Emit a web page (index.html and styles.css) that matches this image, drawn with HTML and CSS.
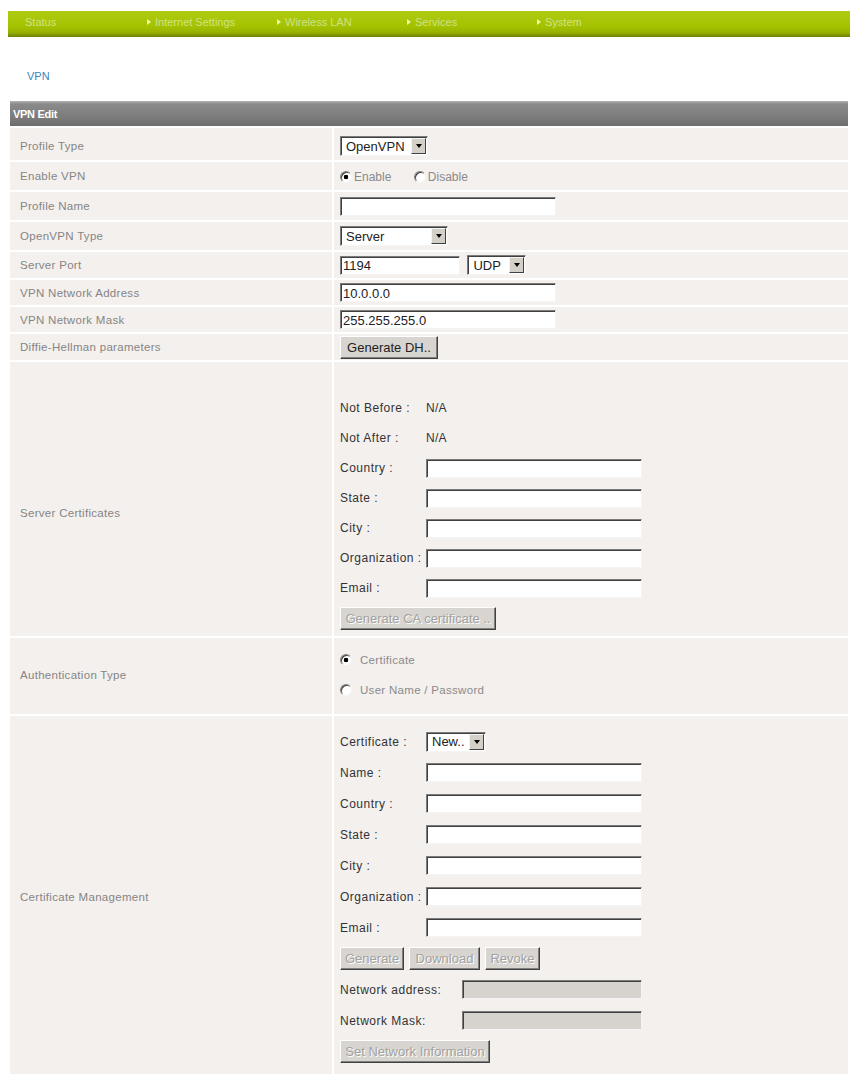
FILE: index.html
```html
<!DOCTYPE html>
<html lang="en">
<head>
    <meta charset="UTF-8">
    <meta name="viewport" content="width=device-width, initial-scale=1.0">
    <title>VPN</title>
    <link rel="stylesheet" href="styles.css">
</head>
<body>
    <div class="page">
        <ul class="menu">
            <li class="menu-item current">Status</li>
            <li class="menu-item">Internet Settings</li>
            <li class="menu-item">Wireless LAN</li>
            <li class="menu-item">Services</li>
            <li class="menu-item">System</li>
        </ul>

        <h1 class="page-title">VPN</h1>

        <table class="vpn-table">
            <tr>
                <th class="table-head" colspan="2">VPN Edit</th>
            </tr>
            <tr class="row-first">
                <td class="label">Profile Type</td>
                <td class="value">
                    <span class="combo combo-profile"><select><option>OpenVPN</option></select><span class="combo-btn"></span></span>
                </td>
            </tr>
            <tr class="row-30">
                <td class="label">Enable VPN</td>
                <td class="value">
                    <label class="choice"><input type="radio" name="enable" checked> Enable</label>
                    <label class="choice"><input type="radio" name="enable"> Disable</label>
                </td>
            </tr>
            <tr class="row-30">
                <td class="label">Profile Name</td>
                <td class="value"><input type="text" class="text-input input-long"></td>
            </tr>
            <tr class="row-30">
                <td class="label">OpenVPN Type</td>
                <td class="value">
                    <span class="combo combo-type"><select><option>Server</option></select><span class="combo-btn"></span></span>
                </td>
            </tr>
            <tr class="row-28">
                <td class="label">Server Port</td>
                <td class="value">
                    <input type="text" class="text-input input-port" value="1194">
                    <span class="combo combo-proto"><select><option>UDP</option></select><span class="combo-btn"></span></span>
                </td>
            </tr>
            <tr class="row-27">
                <td class="label">VPN Network Address</td>
                <td class="value"><input type="text" class="text-input input-long" value="10.0.0.0"></td>
            </tr>
            <tr class="row-27">
                <td class="label">VPN Network Mask</td>
                <td class="value"><input type="text" class="text-input input-long" value="255.255.255.0"></td>
            </tr>
            <tr class="row-28">
                <td class="label">Diffie-Hellman parameters</td>
                <td class="value"><button class="btn btn-dh">Generate DH..</button></td>
            </tr>
            <tr class="row-cert">
                <td class="label">Server Certificates</td>
                <td class="value">
                    <div class="field-list">
                        <div class="field-row"><span class="field-name">Not Before :</span><span class="field-text">N/A</span></div>
                        <div class="field-row"><span class="field-name">Not After :</span><span class="field-text">N/A</span></div>
                        <div class="field-row"><span class="field-name">Country :</span><input type="text" class="text-input input-long"></div>
                        <div class="field-row"><span class="field-name">State :</span><input type="text" class="text-input input-long"></div>
                        <div class="field-row"><span class="field-name">City :</span><input type="text" class="text-input input-long"></div>
                        <div class="field-row"><span class="field-name">Organization :</span><input type="text" class="text-input input-long"></div>
                        <div class="field-row"><span class="field-name">Email :</span><input type="text" class="text-input input-long"></div>
                        <div class="field-row"><button class="btn btn-ca" disabled>Generate CA certificate ..</button></div>
                    </div>
                </td>
            </tr>
            <tr class="row-auth">
                <td class="label">Authentication Type</td>
                <td class="value">
                    <div class="field-list">
                        <div class="field-row"><label class="choice choice-wide"><input type="radio" name="auth" checked> Certificate</label></div>
                        <div class="field-row"><label class="choice choice-wide"><input type="radio" name="auth"> User Name / Password</label></div>
                    </div>
                </td>
            </tr>
            <tr class="row-manage">
                <td class="label">Certificate Management</td>
                <td class="value">
                    <div class="field-list list-31">
                        <div class="field-row">
                            <span class="field-name">Certificate :</span>
                            <span class="combo combo-new"><select><option>New..</option></select><span class="combo-btn"></span></span>
                        </div>
                        <div class="field-row"><span class="field-name">Name :</span><input type="text" class="text-input input-long"></div>
                        <div class="field-row"><span class="field-name">Country :</span><input type="text" class="text-input input-long"></div>
                        <div class="field-row"><span class="field-name">State :</span><input type="text" class="text-input input-long"></div>
                        <div class="field-row"><span class="field-name">City :</span><input type="text" class="text-input input-long"></div>
                        <div class="field-row"><span class="field-name">Organization :</span><input type="text" class="text-input input-long"></div>
                        <div class="field-row"><span class="field-name">Email :</span><input type="text" class="text-input input-long"></div>
                        <div class="field-row btn-group">
                            <button class="btn btn-generate" disabled>Generate</button>
                            <button class="btn btn-download" disabled>Download</button>
                            <button class="btn btn-revoke" disabled>Revoke</button>
                        </div>
                        <div class="field-row"><span class="field-name field-name-wide">Network address:</span><input type="text" class="text-input input-net" disabled></div>
                        <div class="field-row"><span class="field-name field-name-wide">Network Mask:</span><input type="text" class="text-input input-net" disabled></div>
                        <div class="field-row"><button class="btn btn-network" disabled>Set Network Information</button></div>
                    </div>
                </td>
            </tr>
        </table>
    </div>
</body>
</html>
```

FILE: styles.css
```css
* {
    margin: 0;
    padding: 0;
    box-sizing: border-box;
}

body {
    font-family: "Liberation Sans", Arial, sans-serif;
    background-color: #fff;
    color: #333;
}

.page {
    padding: 11px 4px 0 8px;
}

/* top menu */
.menu {
    display: flex;
    align-items: center;
    list-style: none;
    height: 26px;
    padding: 0 0 4px 9px;
    background: linear-gradient(#afcb12, #a5c200 60%, #98b200 82%, #6f8008);
}

.menu-item {
    width: 130px;
    display: flex;
    align-items: center;
    gap: 4px;
    font-size: 11px;
    color: #d0e284;
}

.menu-item::before {
    content: "";
    border-left: 4px solid #eefca0;
    border-top: 3px solid transparent;
    border-bottom: 3px solid transparent;
}

.menu-item.current::before {
    visibility: hidden;
}

.page-title {
    font-size: 11px;
    font-weight: normal;
    line-height: 20px;
    color: #3d82b8;
    margin: 29px 0 15px 19px;
}

/* form table */
.vpn-table {
    width: 838px;
    margin: 0 2px;
    border-collapse: separate;
    border-spacing: 0;
}

.table-head {
    height: 27px;
    border-bottom: 2px solid #fff;
    background: linear-gradient(#b4b4b4, #8a8a8a 12%, #7a7a7a 70%, #6c6c6c);
    color: #fff;
    font-size: 11px;
    font-weight: bold;
    text-align: left;
    padding-left: 3px;
    letter-spacing: -0.3px;
}

.label,
.value {
    background-color: #f4f0ee;
    border-bottom: 2px solid #fff;
    vertical-align: middle;
}

.label {
    width: 324px;
    border-right: 2px solid #fff;
    padding-left: 10px;
    font-size: 11.5px;
    letter-spacing: 0.3px;
    color: #858585;
}

.value {
    padding-left: 6px;
}

.row-first td {
    height: 34px;
    padding-top: 4px;
}

.row-30 td {
    height: 30px;
}

.row-28 td {
    height: 28px;
}

.row-27 td {
    height: 27px;
}

.row-cert td {
    padding-top: 31px;
    padding-bottom: 3px;
}

.row-auth td {
    padding-top: 7px;
    padding-bottom: 9px;
}

.row-manage td {
    padding-top: 10px;
    padding-bottom: 7px;
}

/* stacked fields inside a value cell */
.field-list {
    display: flex;
    flex-direction: column;
}

.field-row {
    height: 30px;
    display: flex;
    align-items: center;
}

.list-31 .field-row {
    height: 31px;
}

.field-name {
    width: 86px;
    font-size: 12px;
    letter-spacing: 0.5px;
    color: #333;
    white-space: nowrap;
}

.field-name-wide {
    width: 122px;
}

.field-text {
    font-size: 12px;
    letter-spacing: 0.3px;
    color: #333;
}

/* classic controls */
.text-input {
    height: 19px;
    border: 1px solid;
    border-color: #7b7b7b #f4f4f4 #f4f4f4 #7b7b7b;
    box-shadow: inset 1px 1px #404040;
    background: #fff;
    font-family: "Liberation Sans", Arial, sans-serif;
    font-size: 13px;
    color: #222;
    padding: 1px 2px 0;
    vertical-align: middle;
    outline: none;
}

.text-input:disabled {
    background: #d6d3cf;
}

.input-long {
    width: 216px;
}

.input-port {
    width: 120px;
    margin-right: 3px;
}

.input-net {
    width: 180px;
}

.combo {
    display: inline-flex;
    align-items: stretch;
    height: 20px;
    border: 1px solid;
    border-color: #7b7b7b #f4f4f4 #f4f4f4 #7b7b7b;
    box-shadow: inset 1px 1px #404040;
    background: #fff;
    padding: 1px;
    vertical-align: middle;
}

.combo select {
    appearance: none;
    -webkit-appearance: none;
    flex: 1;
    min-width: 0;
    border: none;
    background: transparent;
    font-family: "Liberation Sans", Arial, sans-serif;
    font-size: 13px;
    color: #222;
    padding: 0 0 0 4px;
    outline: none;
}

.combo-btn {
    width: 15px;
    background: #d4d0c8;
    border: 1px solid;
    border-color: #f4f4f4 #404040 #404040 #f4f4f4;
    display: flex;
    align-items: center;
    justify-content: center;
}

.combo-btn::after {
    content: "";
    border-top: 4px solid #000;
    border-left: 3.5px solid transparent;
    border-right: 3.5px solid transparent;
}

.combo-profile {
    width: 88px;
}

.combo-type {
    width: 108px;
}

.combo-proto {
    width: 59px;
}

.combo-new {
    width: 60px;
}

.choice {
    display: inline-flex;
    align-items: center;
    gap: 2px;
    font-size: 12px;
    color: #8a8a8a;
    margin-right: 18px;
    vertical-align: middle;
}

.choice-wide {
    gap: 8px;
    font-size: 11.5px;
    letter-spacing: 0.3px;
}

.choice input {
    appearance: none;
    -webkit-appearance: none;
    width: 12px;
    height: 12px;
    border-radius: 50%;
    border: 1px solid;
    border-color: #808080 #f4f4f4 #f4f4f4 #808080;
    box-shadow: inset 1px 1px #404040;
    background: #fff;
}

.choice input:checked {
    background: radial-gradient(circle, #000 0 2px, #fff 2.6px);
}

.btn {
    height: 23px;
    background: #d8d5d0;
    border: 1px solid;
    border-color: #fff #404040 #404040 #fff;
    box-shadow: inset -1px -1px #808080;
    font-family: "Liberation Sans", Arial, sans-serif;
    font-size: 13px;
    color: #222;
    padding: 0 4px;
    white-space: nowrap;
}

.btn:disabled {
    color: #a2a2a2;
    text-shadow: 1px 1px #fff;
}

.btn-dh {
    width: 98px;
}

.btn-ca {
    width: 156px;
}

.btn-group {
    gap: 5px;
}

.btn-generate {
    width: 64px;
}

.btn-download {
    width: 71px;
}

.btn-revoke {
    width: 55px;
}

.btn-network {
    width: 150px;
}
```
